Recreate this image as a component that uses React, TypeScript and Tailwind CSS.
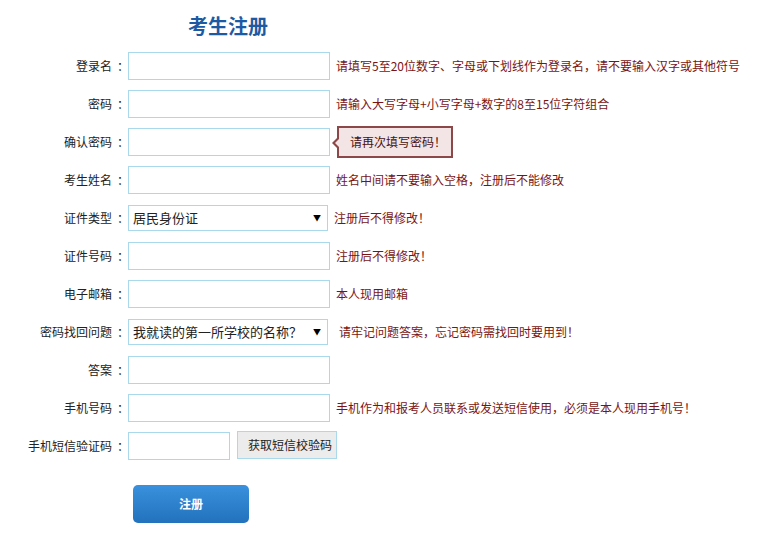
import React from "react";

const font = { fontFamily: '"Noto Sans CJK SC", "Microsoft YaHei", sans-serif' };

type Row = {
  label: string;
  kind: "input" | "select" | "sms";
  options?: string[];
  hint?: string;
  tip?: string;
  hintGap?: string;
};

const rows: Row[] = [
  { label: "登录名", kind: "input", hint: "请填写5至20位数字、字母或下划线作为登录名，请不要输入汉字或其他符号" },
  { label: "密码", kind: "input", hint: "请输入大写字母+小写字母+数字的8至15位字符组合" },
  { label: "确认密码", kind: "input", tip: "请再次填写密码！" },
  { label: "考生姓名", kind: "input", hint: "姓名中间请不要输入空格，注册后不能修改" },
  { label: "证件类型", kind: "select", options: ["居民身份证", "护照", "港澳台居民居住证"], hint: "注册后不得修改！" },
  { label: "证件号码", kind: "input", hint: "注册后不得修改！" },
  { label: "电子邮箱", kind: "input", hint: "本人现用邮箱" },
  {
    label: "密码找回问题",
    kind: "select",
    options: ["我就读的第一所学校的名称？", "我母亲的名字？", "我最喜欢的颜色？"],
    hint: "请牢记问题答案，忘记密码需找回时要用到！",
    hintGap: "ml-[11px]",
  },
  { label: "答案", kind: "input" },
  { label: "手机号码", kind: "input", hint: "手机作为和报考人员联系或发送短信使用，必须是本人现用手机号！" },
  { label: "手机短信验证码", kind: "sms" },
];

function Field({ row }: { row: Row }) {
  if (row.kind === "select") {
    return (
      <div className="relative">
        <select className="appearance-none w-[200px] h-[26px] border border-[#a9d9ea] bg-white pl-[4px] pr-[20px] text-[13px] text-[#222] outline-none">
          {row.options!.map((o) => (
            <option key={o}>{o}</option>
          ))}
        </select>
        <span className="pointer-events-none absolute right-[7px] top-[8px] text-[8px] leading-[9px] text-black">▼</span>
      </div>
    );
  }
  if (row.kind === "sms") {
    return (
      <div className="flex items-center">
        <input className="w-[102px] h-[28px] border border-[#a9d9ea] bg-white outline-none" />
        <button className="ml-[7px] -mt-[2px] w-[100px] h-[28px] border border-[#a9d9ea] bg-[#ececec] pl-[10px] text-left text-[12px] text-[#222]">
          获取短信校验码
        </button>
      </div>
    );
  }
  return <input className="w-[202px] h-[28px] border border-[#a9d9ea] bg-white outline-none" type={row.label.endsWith("密码") ? "password" : "text"} />;
}

export default function App() {
  return (
    <div className="w-[773px] h-[537px] bg-white text-[12px]" style={font}>
      <h1 className="w-[456px] pt-[11px] h-[52px] text-center text-[20px] leading-[30px] font-bold text-[#1d5aa4]">考生注册</h1>
      <div className="flex flex-col gap-[10px]">
        {rows.map((row) => (
          <div key={row.label} className="flex items-center h-[28px]">
            <label className="w-[124px] mr-[4px] text-right text-[12px] text-[#222] whitespace-nowrap">
              {row.label}
              <span className="inline-block w-[12px] pl-[5px] text-left">：</span>
            </label>
            <Field row={row} />
            {row.hint && (
              <span className={`${row.hintGap ?? "ml-[6px]"} text-[12px] text-[#7a1414] whitespace-nowrap`}>{row.hint}</span>
            )}
            {row.tip && (
              <div className="relative ml-[7px] h-[32px] w-[116px] border-2 border-[#8c4848] bg-[#f3e5e5] pl-[11px] flex items-center text-[12px] text-[#4a1010]">
                <span className="absolute -left-[7px] top-[9px] w-0 h-0 border-y-[6px] border-y-transparent border-r-[6px] border-r-[#8c4848]" />
                <span className="absolute -left-[4px] top-[11px] w-0 h-0 border-y-[4px] border-y-transparent border-r-[4px] border-r-[#f3e5e5]" />
                {row.tip}
              </div>
            )}
          </div>
        ))}
      </div>
      <button className="mt-[25px] ml-[133px] w-[116px] h-[38px] rounded-[5px] bg-gradient-to-b from-[#3a91dd] to-[#2272bd] text-[12px] font-bold text-white">
        注册
      </button>
    </div>
  );
}
